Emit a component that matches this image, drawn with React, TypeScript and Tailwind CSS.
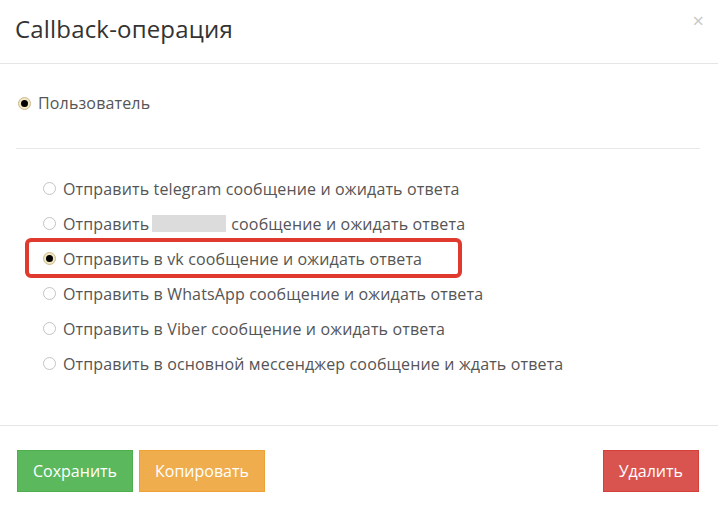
import React from 'react'

const options = [
  { label: 'Отправить telegram сообщение и ожидать ответа' },
  { label: 'blurred' },
  { label: 'Отправить в vk сообщение и ожидать ответа', checked: true },
  { label: 'Отправить в WhatsApp сообщение и ожидать ответа' },
  { label: 'Отправить в Viber сообщение и ожидать ответа' },
  { label: 'Отправить в основной мессенджер сообщение и ждать ответа' },
]

function Radio({ checked }: { checked?: boolean }) {
  if (checked) {
    return (
      <span className="w-[13px] h-[13px] rounded-full border border-[#c9b98f] bg-[#f3e6c3] flex items-center justify-center shrink-0">
        <span className="w-[7px] h-[7px] rounded-full bg-black" />
      </span>
    )
  }
  return <span className="w-[13px] h-[13px] rounded-full border border-[#c4c4c4] bg-white shrink-0" />
}

export default function App() {
  return (
    <div
      className="w-[718px] h-[512px] bg-white text-[#555] overflow-hidden"
      style={{ fontFamily: '"Open Sans", "Liberation Sans", sans-serif' }}
    >
      <div className="h-[64px] border-b border-[#e5e5e5] flex items-start justify-between pl-[15px] pr-[14px]">
        <h4 className="text-[24px] text-[#333] leading-none mt-[17px] tracking-[0.18px]">Callback-операция</h4>
        <span className="text-[20px] text-[#c8c8c8] leading-none mt-[11px]">×</span>
      </div>

      <div className="h-[361px] px-[16px] pt-[29px] tracking-[0.15px]">
        <label className="flex items-center gap-[7px] h-[20px] pl-[2px] text-[16px]">
          <Radio checked />
          <span>Пользователь</span>
        </label>
        <div className="mt-[35px] border-t border-[#e8e8e8] mr-[2px]" />
        <div className="mt-[22px] ml-[9px]">
          {options.map((o, i) => (
            <div key={i} className="relative h-[35px] flex items-center gap-[7px] pl-[18px] text-[16px]">
              {o.checked && (
                <span className="absolute left-0 top-[-3px] bottom-[-2px] w-[437px] border-4 border-[#e0392e] rounded-[6px]" />
              )}
              <Radio checked={o.checked} />
              {o.label === 'blurred' ? (
                <span className="flex items-center">
                  Отправить
                  <span className="inline-block w-[74px] h-[17px] bg-[#dcdcdc] ml-[3px] mr-[5px]" />
                  сообщение и ожидать ответа
                </span>
              ) : (
                <span>{o.label}</span>
              )}
            </div>
          ))}
        </div>
      </div>

      <div className="border-t border-[#e5e5e5] px-[17px] pt-[24px] flex items-start">
        <button className="h-[42px] px-[15px] bg-[#5cb85c] border border-[#4cae4c] text-white text-[16px]">Сохранить</button>
        <button className="h-[42px] px-[15px] ml-[6px] bg-[#f0ad4e] border border-[#eea236] text-white text-[16px]">Копировать</button>
        <button className="h-[42px] px-[15px] ml-auto mr-[2px] bg-[#d9534f] border border-[#d43f3a] text-white text-[16px]">Удалить</button>
      </div>
    </div>
  )
}
